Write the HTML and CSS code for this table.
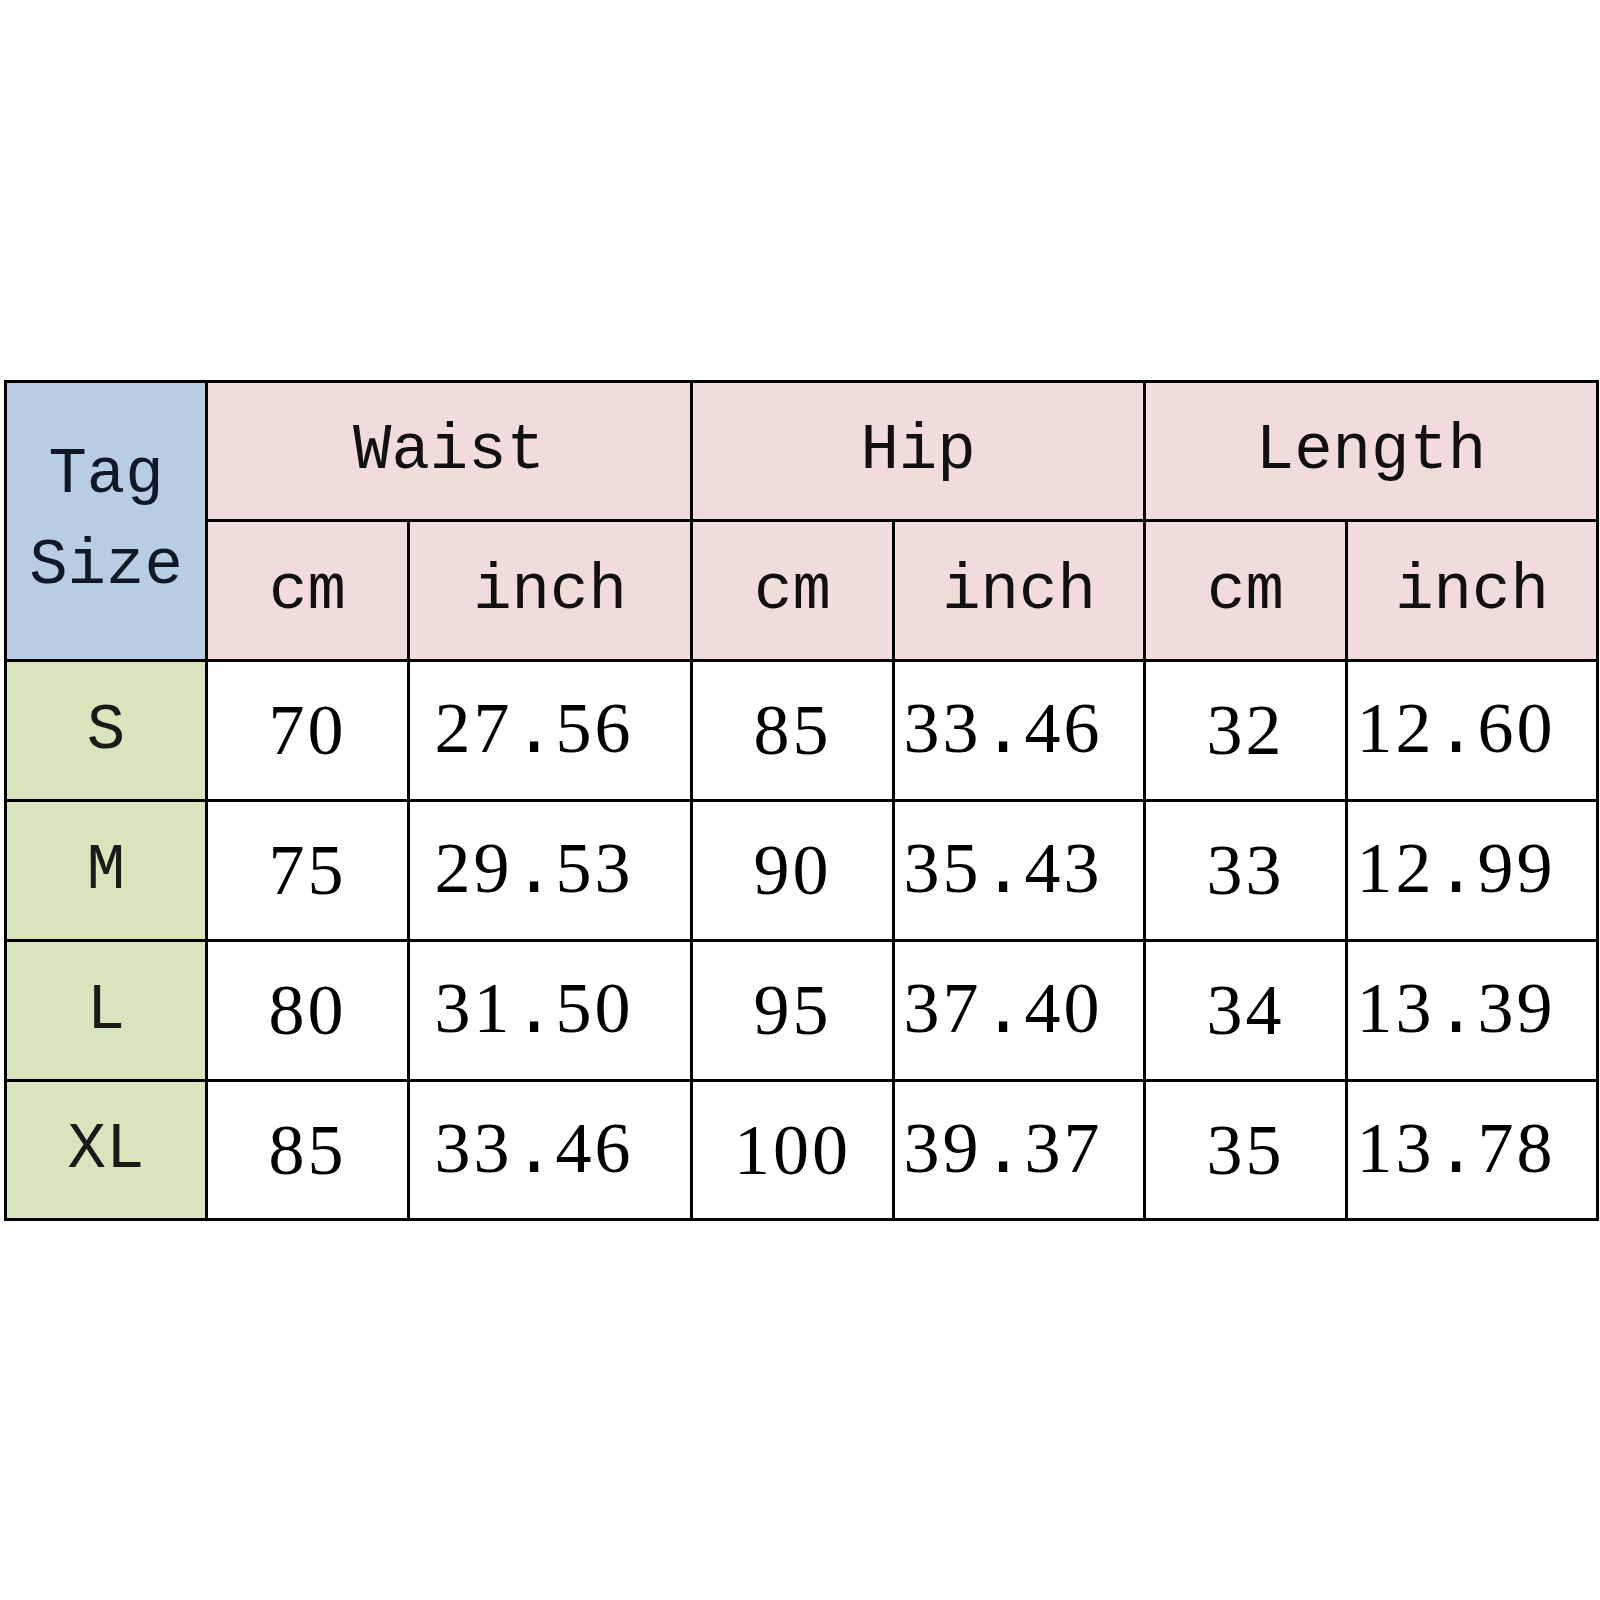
FILE: index.html
```html
<!DOCTYPE html>
<html>
<head>
<meta charset="utf-8">
<link rel="stylesheet" href="styles.css">
</head>
<body>
<table class="chart">
  <colgroup>
    <col class="c-tag"><col class="c-cm"><col class="c-winch"><col class="c-cm"><col class="c-inch"><col class="c-cm"><col class="c-inch">
  </colgroup>
  <thead>
    <tr class="r-h1">
      <th rowspan="2" class="tag">Tag<br>Size</th>
      <th colspan="2" class="grp">Waist</th>
      <th colspan="2" class="grp">Hip</th>
      <th colspan="2" class="grp">Length</th>
    </tr>
    <tr class="r-h2">
      <th class="unit">cm</th><th class="unit">inch</th>
      <th class="unit">cm</th><th class="unit">inch</th>
      <th class="unit">cm</th><th class="unit">inch</th>
    </tr>
  </thead>
  <tbody>
    <tr>
      <th class="size">S</th>
      <td>70</td><td class="in">27<span class="dot">.</span>56</td>
      <td>85</td><td class="in">33<span class="dot">.</span>46</td>
      <td>32</td><td class="in">12<span class="dot">.</span>60</td>
    </tr>
    <tr>
      <th class="size">M</th>
      <td>75</td><td class="in">29<span class="dot">.</span>53</td>
      <td>90</td><td class="in">35<span class="dot">.</span>43</td>
      <td>33</td><td class="in">12<span class="dot">.</span>99</td>
    </tr>
    <tr>
      <th class="size">L</th>
      <td>80</td><td class="in">31<span class="dot">.</span>50</td>
      <td>95</td><td class="in">37<span class="dot">.</span>40</td>
      <td>34</td><td class="in">13<span class="dot">.</span>39</td>
    </tr>
    <tr>
      <th class="size">XL</th>
      <td>85</td><td class="in">33<span class="dot">.</span>46</td>
      <td>100</td><td class="in">39<span class="dot">.</span>37</td>
      <td>35</td><td class="in">13<span class="dot">.</span>78</td>
    </tr>
  </tbody>
</table>
</body>
</html>
```

FILE: styles.css
```css
html, body {
  margin: 0;
  background: #ffffff;
}
body {
  padding: 380px 0 0 4px;
}
.chart {
  border-collapse: separate;
  border-spacing: 3px;
  background: #000000;
  table-layout: fixed;
  width: 1595px;
}
.c-tag { width: 198px; }
.c-cm { width: 199px; }
.c-winch { width: 280px; }
.c-inch { width: 248px; }

.chart th, .chart td {
  padding: 0;
  height: 137px;
  text-align: center;
  vertical-align: middle;
  font-weight: normal;
  background: #ffffff;
  color: #000000;
}
.chart tr.r-h1 > th { height: 136px; }
.chart tbody tr:last-child > * { height: 136px; }

.tag {
  background: #b8cce4 !important;
  font-family: "Liberation Mono", "Courier New", monospace;
  font-size: 64px;
  line-height: 91px;
  color: #111827 !important;
}
.grp, .unit {
  background: #f2dcdb !important;
  font-family: "Liberation Mono", "Courier New", monospace;
  font-size: 64px;
  color: #111 !important;
}
.size {
  background: #d8e4bc !important;
  font-family: "Liberation Mono", "Courier New", monospace;
  font-size: 64px;
  color: #1a1a1a !important;
}
.chart td {
  font-family: "Liberation Serif", "Times New Roman", serif;
  font-size: 72px;
  letter-spacing: 3px;
}
.chart td.in {
  padding-right: 32px;
}
.dot {
  font-family: "Liberation Mono", "Courier New", monospace;
  letter-spacing: 0;
}
```
